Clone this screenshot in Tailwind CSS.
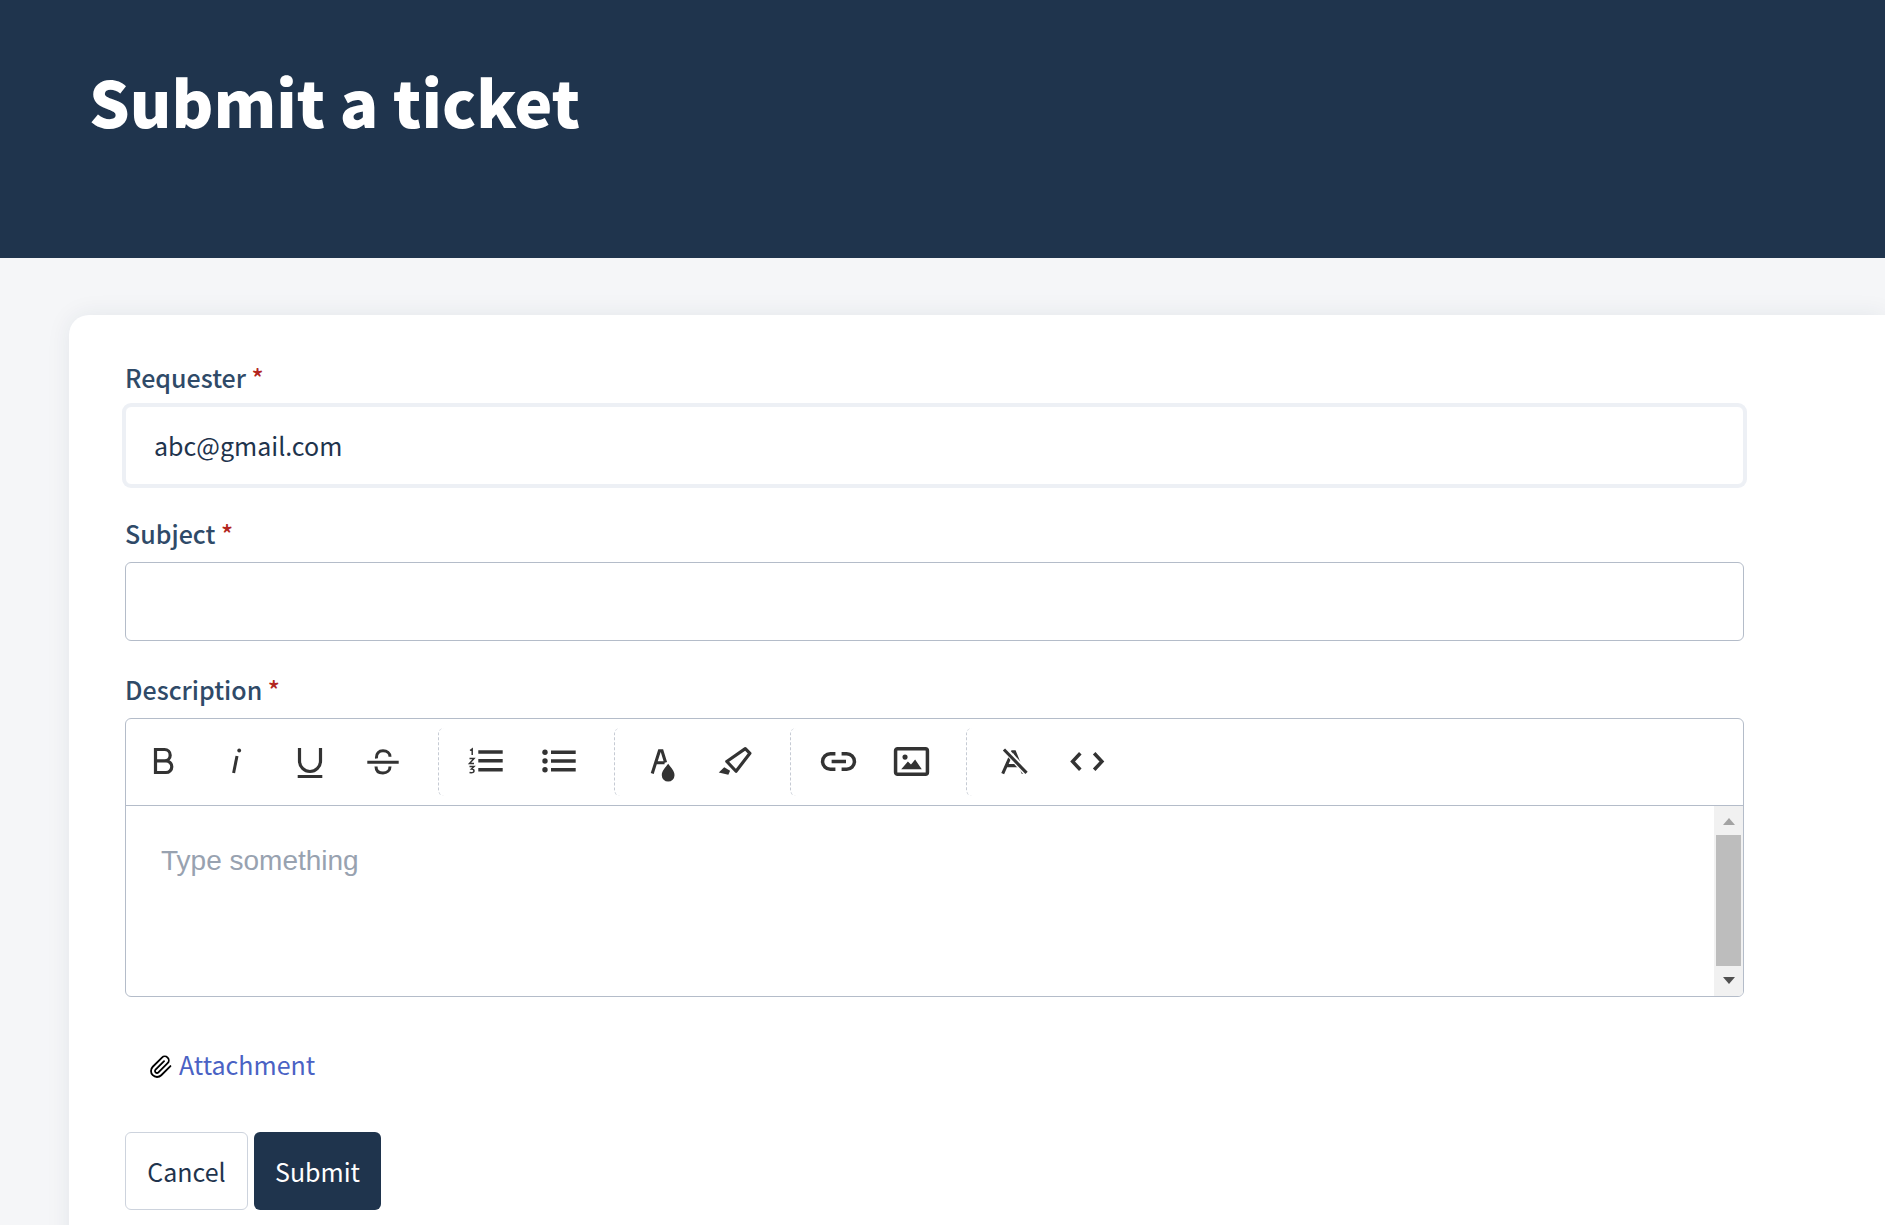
<!DOCTYPE html>
<html lang="en">
<head>
<meta charset="utf-8">
<title>Submit a ticket</title>
<script src="https://cdn.jsdelivr.net/npm/@tailwindcss/browser@4"></script>
</head>
<body class="m-0">
<div class="h-[1225px] overflow-hidden bg-[#f5f6f8] font-['Noto_Sans_CJK_SC',sans-serif]">
  <header class="h-[258px] bg-[#1f344d] pl-[89px] pt-[60px]">
    <h1 class="text-[63.800px] leading-[80px] font-black text-white">Submit a ticket</h1>
  </header>
  <main class="ml-[69px] mt-[57px] h-[1000px] rounded-l-[20px] bg-white pl-[56px] pt-[47px] shadow-[0_0_24px_rgba(30,50,80,0.08)]">
    <form class="w-[1619px]">
      <label class="block h-[30px] text-[25px] leading-[30px] font-medium text-[#2f4a68]">Requester <span class="text-[#b3261e]">*</span></label>
      <input readonly value="abc@gmail.com" class="mt-[14px] block h-[79px] w-full rounded-md border border-[#edf0f5] bg-white px-[28px] pb-[2px] text-[25px] text-[#1f344d] outline-none ring-[3px] ring-[#edf0f5]">
      <label class="mt-[33px] block h-[30px] text-[25px] leading-[30px] font-medium text-[#2f4a68]">Subject <span class="text-[#b3261e]">*</span></label>
      <input class="mt-[14px] block h-[79px] w-full rounded-md border border-[#b4bcc9] bg-white px-[28px] text-[25px] text-[#1f344d] outline-none">
      <label class="mt-[33px] block h-[30px] text-[25px] leading-[30px] font-medium text-[#2f4a68]">Description <span class="text-[#b3261e]">*</span></label>
      <div class="mt-[14px] h-[279px] overflow-hidden rounded-md border border-[#b4bcc9] bg-white">
        <div class="flex h-[87px] items-center border-b border-[#b4bcc9] pb-[1px] pl-[1px] text-[#333]">
          <div class="flex">
            <button type="button" class="flex h-[36px] w-[73px] items-center justify-center pb-[2px]"><svg class="size-9" viewBox="0 0 36 36" fill="none" stroke="currentColor" stroke-width="3.200"><path d="M9.5 6.5h9a5.6 5.6 0 0 1 0 11.4h-9zM9.5 17.900h10.500a5.800 5.800 0 0 1 0 11.600h-10.500z"/></svg></button>
            <button type="button" class="flex h-[36px] w-[73px] items-center justify-center pb-[2px]"><svg class="size-9" viewBox="0 0 36 36" fill="none" stroke="currentColor" stroke-width="3"><path d="M18 13 14.600 30"/><circle cx="20.200" cy="7.500" r="1.900" fill="currentColor" stroke="none"/></svg></button>
            <button type="button" class="flex h-[36px] w-[73px] items-center justify-center pb-[2px]"><svg class="size-9 overflow-visible" viewBox="0 0 36 36" fill="none" stroke="currentColor" stroke-width="3.200"><path d="M7.500 5v13a10.500 10.500 0 0 0 21 0V5M5.700 33.500h24.600"/></svg></button>
            <button type="button" class="flex h-[36px] w-[73px] items-center justify-center pb-[2px]"><svg class="size-9" viewBox="0 0 36 36" fill="none" stroke="currentColor" stroke-width="3"><path d="M2.300 19.300h31.400M11.500 15.500c-.5-5 2.500-7.700 6.500-7.700s7 2 7 6M11 23.500c0 4.500 3 6.500 7 6.500s7-2.500 7-6.500"/></svg></button>
          </div>
          <div class="ml-[19px] flex h-[68px] w-[176px] shrink-0 items-center rounded-l-md border-l border-dashed border-[#c5cad3] pl-[10px]">
            <button type="button" class="flex h-[36px] w-[73px] items-center justify-center pb-[2px]"><svg class="size-9 overflow-visible" viewBox="0 0 36 36" fill="none" stroke="currentColor"><path stroke-width="3.500" d="M10.300 9h24.400M10.300 17.800h24.400M10.300 26.700h24.400"/><path stroke-width="1.500" d="M2 7.500 4.200 6v6M1.500 15.500h4.500l-4.500 5h4.500M1.500 23.500h4.500l-2.500 2.500c2 0 2.500 1 2.500 2s-1 2-4.500 1.500"/></svg></button>
            <button type="button" class="flex h-[36px] w-[73px] items-center justify-center pb-[2px]"><svg class="size-9 overflow-visible" viewBox="0 0 36 36" fill="none" stroke="currentColor"><path stroke-width="3.500" d="M10 9.300h24.700M10 18h24.700M10 26.700h24.700"/><circle cx="4" cy="9.300" r="2.700" fill="currentColor" stroke="none"/><circle cx="4" cy="18" r="2.700" fill="currentColor" stroke="none"/><circle cx="4" cy="26.700" r="2.700" fill="currentColor" stroke="none"/></svg></button>
          </div>
          <div class="flex h-[68px] w-[176px] shrink-0 items-center rounded-l-md border-l border-dashed border-[#c5cad3] pl-[11px]">
            <button type="button" class="flex h-[36px] w-[73px] items-center justify-center"><svg class="size-[37px] overflow-visible" viewBox="0 0 36 36" fill="none" stroke="currentColor"><path stroke-width="3" d="M8 29.700 15 7.500h2.500l3.500 11.500M11 19.200h9"/><path fill="currentColor" stroke="none" d="M23.500 20.300c3 4 6.200 7 6.200 11a6.200 6.200 0 0 1-12.400 0c0-4 3.200-7 6.200-11z"/></svg></button>
            <button type="button" class="flex h-[36px] w-[71px] items-center justify-center"><svg class="size-[37px] overflow-visible" viewBox="0 0 36 36" fill="none" stroke="currentColor"><path stroke-width="3.100" stroke-linejoin="round" d="M10.500 18 28.500 5.500 33 10 19.500 27.500z"/><path fill="currentColor" stroke="none" d="M2.700 28.700 8 23.700 13.700 27 12 31z"/></svg></button>
          </div>
          <div class="flex h-[68px] w-[176px] shrink-0 items-center rounded-l-md border-l border-dashed border-[#c5cad3] pl-[11px]">
            <button type="button" class="flex h-[36px] w-[73px] items-center justify-center"><svg class="size-[37px]" viewBox="0 0 36 36" fill="none" stroke="currentColor" stroke-width="3.400"><path d="M15 10.500H10a7.500 7.500 0 0 0 0 15h5M21 10.500h5a7.500 7.500 0 0 1 0 15h-5M11.300 18h14"/></svg></button>
            <button type="button" class="flex h-[36px] w-[73px] items-center justify-center"><svg class="size-[37px]" viewBox="0 0 36 36" fill="none" stroke="currentColor" stroke-width="3.400"><rect x="2.500" y="5.500" width="31" height="25" rx="2"/><circle cx="11.700" cy="13.700" r="2.500" fill="currentColor" stroke="none"/><path fill="currentColor" stroke="none" d="M8 25.500 14.500 18 17.500 21 21.500 16 28 25.500z"/></svg></button>
          </div>
          <div class="flex h-[68px] items-center rounded-l-md border-l border-dashed border-[#c5cad3] pl-[10px]">
            <button type="button" class="flex h-[36px] w-[73px] items-center justify-center"><svg class="size-[37px]" viewBox="0 0 36 36" fill="none" stroke="currentColor" stroke-width="3"><path d="M7.500 29.700 17 8.500h2l8.500 21.200M11 22h14"/><path stroke="#fff" stroke-width="6" d="M11 7.500l20 22"/><path d="M8.700 6.300l22 22.700"/></svg></button>
            <button type="button" class="flex h-[36px] w-[74px] items-center justify-center"><svg class="size-[37px]" viewBox="0 0 36 36" fill="none" stroke="currentColor" stroke-width="3.400"><path d="M11 10 3.500 18 11 26M24.500 10 32 18 24.500 26"/></svg></button>
          </div>
        </div>
        <div class="flex h-[190px]">
          <div class="flex-1 pl-[35px] pt-[37px] font-['Liberation_Sans',sans-serif] text-[28px] leading-[36px] text-[#98a2b0]">Type something</div>
          <div class="flex w-[29px] flex-col bg-[#f1f1f1] px-[2px]">
            <div class="flex h-[29px] items-center justify-center pt-[2px]"><div class="h-0 w-0 border-x-[6.500px] border-b-[7px] border-x-transparent border-b-[#a3a3a3]"></div></div>
            <div class="h-[131px] bg-[#bdbdbd]"></div>
            <div class="flex h-[29px] items-center justify-center"><div class="h-0 w-0 border-x-[6.500px] border-t-[7px] border-x-transparent border-t-[#505050]"></div></div>
          </div>
        </div>
      </div>
      <div class="mt-[49px] flex h-[36px] items-center pl-[24px]">
        <svg class="mt-[5px] size-[24px]" viewBox="0 0 24 24" fill="none" stroke="#000" stroke-width="1.800" stroke-linecap="round" stroke-linejoin="round"><path d="M21.440 11.050l-9.190 9.190a6 6 0 0 1-8.490-8.490l9.190-9.190a4 4 0 0 1 5.660 5.660l-9.200 9.190a2 2 0 0 1-2.830-2.830l8.490-8.480"/></svg>
        <a class="ml-[6px] text-[25px] leading-[36px] text-[#4a62c4]">Attachment</a>
      </div>
      <div class="mt-[50px] flex gap-[6px]">
        <button type="button" class="h-[78px] w-[123px] rounded-md border border-[#cdd3dd] bg-white pt-[2px] text-[25px] text-[#1f344d]">Cancel</button>
        <button type="button" class="h-[78px] w-[127px] rounded-md bg-[#1f344d] pt-[2px] text-[25px] text-white">Submit</button>
      </div>
    </form>
  </main>
</div>
</body>
</html>
